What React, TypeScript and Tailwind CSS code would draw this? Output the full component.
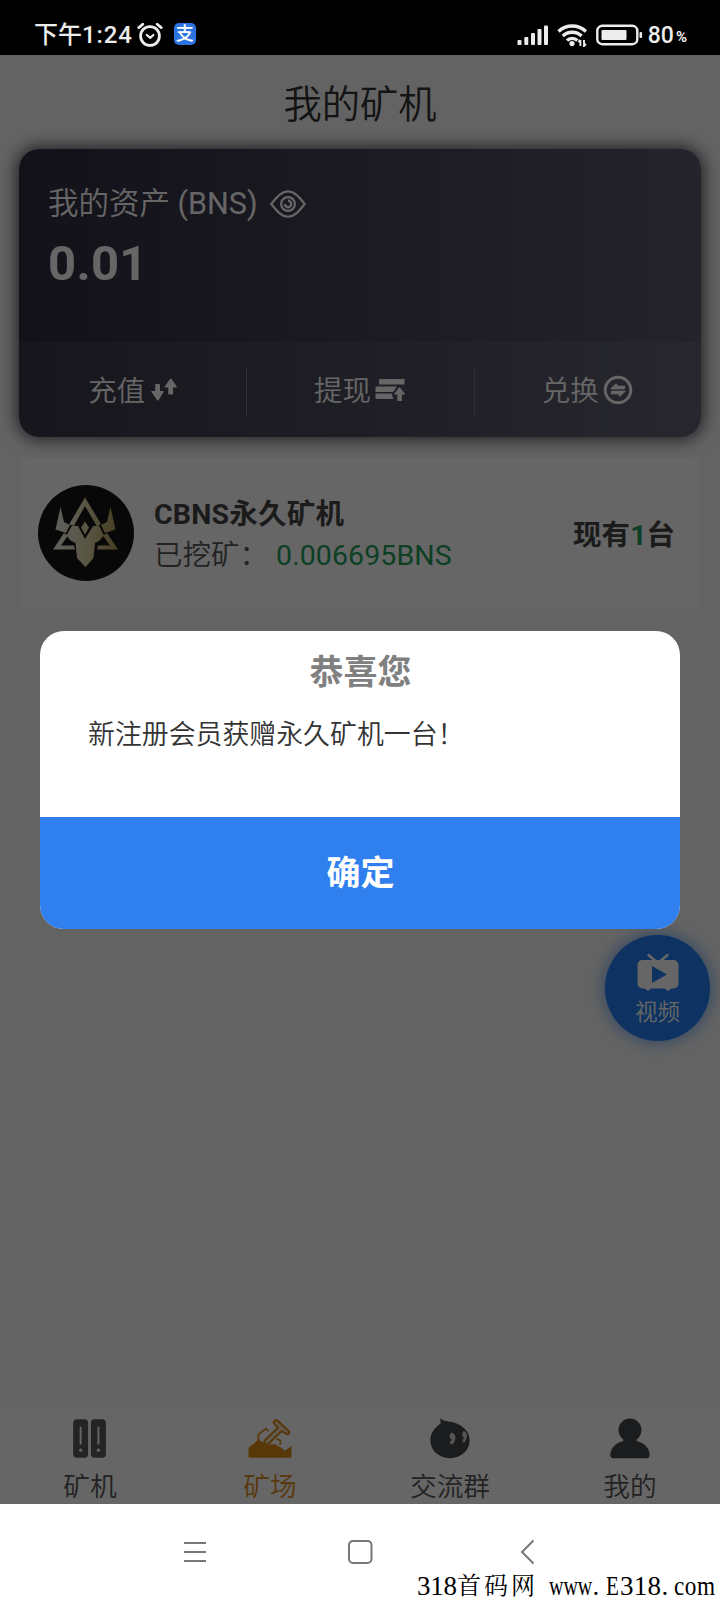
import type { ReactNode } from "react";

function StatusBar() {
  return (
    <div className="flex h-[55px] shrink-0 items-start justify-between bg-black pt-[20px] pr-[33px] pl-[34px] text-[#ececec]">
      <div className="flex h-[30px] items-center">
        <span className="text-[24px] leading-[30px] font-medium whitespace-nowrap">
          下午<span className="tracking-[0.9px]">1:24</span>
        </span>
        <svg className="ml-[4px]" width="26" height="26" viewBox="0 0 26 26" fill="none" stroke="currentColor" strokeWidth="2.8" strokeLinecap="round">
          <circle cx="13" cy="14" r="9.4" />
          <path d="M1.8 5.6 5.8 2.2M24.2 5.6 20.2 2.2" />
          <path d="m9.8 13 3.4 2.8 3.2-2.8" strokeWidth="2.2" strokeLinejoin="round" />
        </svg>
        <span className="mb-[2px] ml-[11px] flex h-[22px] w-[22px] items-center justify-center rounded-[5px] bg-[#2a73e0] text-[18px] leading-none font-medium text-white">
          支
        </span>
      </div>

      <div className="flex h-[30px] items-center">
        <svg width="32" height="22" viewBox="0 0 32 22" fill="currentColor">
          <rect x="0.5" y="16" width="4" height="5" rx="1" />
          <rect x="7.3" y="13" width="4" height="8" rx="1" />
          <rect x="14" y="9" width="4" height="12" rx="1" />
          <rect x="20.5" y="5" width="4" height="16" rx="1" />
          <rect x="27" y="1.5" width="4" height="19.5" rx="1" />
        </svg>
        <svg className="ml-[8px]" width="31" height="24" viewBox="0 0 31 24" fill="none" stroke="currentColor" strokeWidth="3.4">
          <path d="M1.5 8.4a20 20 0 0 1 27.4 0" />
          <path d="M5.8 13a13.5 13.5 0 0 1 18.8 0" />
          <path d="M10 17.4a7.6 7.6 0 0 1 10.4 0" />
          <circle cx="15" cy="20.5" r="2.6" fill="currentColor" stroke="none" />
          <path d="M23.4 17v6M21.4 19l2-2M27 17v6l2-2" strokeWidth="1.9" />
        </svg>
        <svg className="ml-[8px]" width="47" height="22" viewBox="0 0 47 22" fill="none">
          <rect x="1.3" y="1.8" width="40" height="18.4" rx="5" stroke="currentColor" strokeWidth="2.4" />
          <rect x="5.5" y="6" width="25" height="10" rx="1" fill="currentColor" />
          <rect x="43.5" y="8" width="2.6" height="6" rx="1" fill="currentColor" />
        </svg>
        <span className="ml-[5px] pt-[1px] text-[23px] leading-[30px] font-medium">80</span>
        <span className="ml-[2px] pt-[4px] text-[15px] leading-[30px] font-bold">%</span>
      </div>
    </div>
  );
}

function Action({ label, last, children }: { label: string; last?: boolean; children: ReactNode }) {
  return (
    <div className="relative flex flex-1 items-center justify-center text-white">
      <span className="pt-[4px] text-[28.5px] leading-[36px]">{label}</span>
      {children}
      {!last && <span className="absolute top-[26px] -right-px h-[49px] w-px bg-[#77777f]" />}
    </div>
  );
}

function AssetCard() {
  return (
    <div className="mx-[19px] flex h-[288px] w-[682px] flex-col overflow-hidden rounded-[20px] bg-gradient-to-r from-[#302d40] to-[#5c5a6e] shadow-[0_0_16px_3px_rgba(20,20,35,0.7)]">
      <div className="h-[193px] px-[29px] pt-[34px] text-white">
        <div className="flex h-[42px] items-center">
          <span className="text-[30.5px] leading-[42px] whitespace-nowrap">我的资产 (BNS)</span>
          <svg className="ml-[12px]" width="36" height="28" viewBox="0 0 36 28" fill="none" stroke="currentColor" strokeWidth="2.2">
            <path d="M1.3 14C7 7 11.5 1.3 18 1.3S29 7 34.7 14C29 21 24.5 26.7 18 26.7S7 21 1.3 14Z" strokeLinejoin="round" />
            <circle cx="18" cy="14" r="6.9" />
            <path d="M18 10.8a3.2 3.2 0 1 1-3.2 3.2" strokeWidth="2.4" />
          </svg>
        </div>
        <div className="mt-[11px] text-[49px] leading-[56px] font-bold tracking-[0.3px]">0.01</div>
      </div>

      <div className="flex flex-1 bg-white/5">
        <Action label="充值">
          <svg className="ml-[6px]" width="26" height="24" viewBox="0 0 26 24" fill="currentColor">
            <path d="M4.2 7q0-1 1-1h2.8q1 0 1 1v6h3.2q1 0 .4 1l-5 8q-.8 1-1.6 0L.4 14q-.6-1 .4-1h3.400z" />
            <path d="M17.3 15.5q0 1 1 1h2.8q1 0 1-1v-6h3.2q1 0 .4-1l-5-7.5q-.9-1-1.8 0l-5.2 7.500q-.6 1 .4 1h3.2z" />
          </svg>
        </Action>
        <Action label="提现">
          <svg className="ml-[4px]" width="31" height="24" viewBox="0 0 31 24" fill="currentColor">
            <path d="M5 1h24.500v5.500H4V2q0-1 1-1ZM1.500 8.500H22L18 14H.5V9.500q0-1 1-1ZM.5 15.500h16l2 5.500h-17q-1 0-1-1z" />
            <path d="m24.500 9 6 7.500h-3.600V23h-4.600v-6.500h-3.600z" />
          </svg>
        </Action>
        <Action label="兑换" last>
          <svg className="ml-[4px]" width="30" height="30" viewBox="0 0 30 30">
            <circle cx="15" cy="15" r="12.800" fill="none" stroke="currentColor" strokeWidth="3" />
            <path d="m7.500 14 5-5h1.500v2h8l-.5 3zM22.500 16l-5 5H16v-2H8l.5-3z" fill="currentColor" stroke="currentColor" strokeWidth=".6" strokeLinejoin="round" />
          </svg>
        </Action>
      </div>
    </div>
  );
}

function BullLogo() {
  return (
    <svg width="96" height="96" viewBox="0 0 96 96">
      <defs>
        <linearGradient id="gold" x1="15" x2="80" gradientUnits="userSpaceOnUse">
          <stop offset="0" stopColor="#f0efe8" />
          <stop offset="0.5" stopColor="#e0d8ac" />
          <stop offset="1" stopColor="#b09a58" />
        </linearGradient>
      </defs>
      <circle cx="48" cy="48" r="48" fill="#161616" />
      <g fill="url(#gold)">
        <path d="M47 12.500 63 39l-4 2.500L47 21 36 40.500l-5-1ZM26 48l4 2.500L23 60.500h13l1 4H15ZM69 48l-4 2.500 7 10H60l-1 4h21Z" />
        <path d="M22.500 22 26 37l6 3-4 8-10.500-3.500ZM72.500 22 69 37l-6 3 4 8 10.500-3.500Z" />
        <path d="m47 36.500 4 6-4 7-4-7Z" />
        <path d="m34 40.500 6 .5 7 13 8-13 6-.5 5 10-5 5.500-4 2-1.500 15L47.500 82 39 73l-1.500-15-5-2.500-4-5Z" />
      </g>
    </svg>
  );
}

function MinerRow() {
  return (
    <div className="mx-[20px] mt-[21px] flex h-[150px] items-center rounded-md bg-white pr-[25px] pl-[18px]">
      <BullLogo />
      <div className="ml-[20px] flex-1 pt-[4px] text-[28.5px] whitespace-nowrap">
        <div className="h-[41px] font-['Roboto','Noto_Sans_CJK_SC',sans-serif] leading-[41px] font-bold tracking-[0.2px] text-[#444]">CBNS永久矿机</div>
        <div className="h-[41px] leading-[41px] text-[#555]">
          已挖矿：<span className="ml-[8px] tracking-[0.1px] text-[#1e9f5a]">0.006695BNS</span>
        </div>
      </div>
      <div className="pt-[4px] font-['Roboto','Noto_Sans_CJK_SC',sans-serif] text-[28.5px] leading-[41px] font-bold text-[#444]">
        现有<span className="text-[#1e9f5a]">1</span>台
      </div>
    </div>
  );
}

function Tab({ label, active, children }: { label: string; active?: boolean; children: ReactNode }) {
  return (
    <div className={`flex flex-1 flex-col items-center pt-[9px] ${active ? "text-[#dd8d18]" : "text-[#5a5b60]"}`}>
      {children}
      <span className={`mt-[10px] text-[26.7px] leading-[34px] ${active ? "text-[#dd8d18]" : "text-[#555]"}`}>{label}</span>
    </div>
  );
}

function TabBar() {
  return (
    <div className="flex h-[96px] shrink-0 bg-white">
      <Tab label="矿机">
        <svg width="48" height="46" viewBox="0 0 48 46" fill="none">
          <rect x="6" y="2.500" width="16" height="41" rx="4" fill="currentColor" />
          <rect x="25" y="2.500" width="16" height="41" rx="4" fill="currentColor" />
          <path d="M14 10.500v19M33 10.500v19" stroke="white" strokeWidth="2" />
          <circle cx="14" cy="35.500" r="1.700" fill="white" />
          <circle cx="33" cy="35.500" r="1.700" fill="white" />
        </svg>
      </Tab>
      <Tab label="矿场" active>
        <svg width="48" height="46" viewBox="0 0 48 46" fill="none" stroke="currentColor" strokeWidth="1.8" strokeLinejoin="round">
          <path d="M1 33 12 24l8 6 9-1 7 4 4 3 7-5v12.500H1z" fill="currentColor" stroke="none" />
          <path d="M11.500 25v-6l8-6.500 3 2.500M31 23.500l4 1.500v5" />
          <path d="M18.500 28.500c-1.200-1.500-.5-3 .5-4.200L32.500 11.500l-4.500-5q0-3.500 3.500-3L44.500 15.500q.8 3-2.500 2.800L36.500 15 22.500 28.500q-2 1.500-4 0Z" fill="#e3a650" fillOpacity=".35" strokeWidth="2.2" />
        </svg>
      </Tab>
      <Tab label="交流群">
        <svg width="48" height="46" viewBox="0 0 48 46">
          <path d="M13 1c4 4 9 3 15 5 10 3 17 10 17 19 0 11-9 19-21 19S3 36 3 25c0-8 5-14 11-18 0-2 0-4-1-6Z" fill="#41464c" />
          <path d="M25.500 16.500c3.500 1 5 4.500 4.200 7-.8 3.500-2.200 5-3.700 6-3-1-2.500-3.500 0-4.500-.5-1.500-1-1.500-2-2.500-1.200-2 0-5 1.500-6ZM38.500 15c3.500 1 4 4 3.500 6.500s-1.500 5-3 6c-2.500-1-2-3.500 0-4.500-.5-1.500-1-1.500-1.500-2.500-.8-2 0-4.500 1-5.500Z" fill="#d5d5d5" />
        </svg>
      </Tab>
      <Tab label="我的">
        <svg width="48" height="46" viewBox="0 0 48 46" fill="#41464c">
          <circle cx="24" cy="14" r="12.300" />
          <path d="M18 22h12l1.500 4C40 28 45 34 45 41q0 3-3 3H6q-3 0-3-3C3 34 8 28 16.500 26Z" />
        </svg>
      </Tab>
    </div>
  );
}

function VideoButton() {
  return (
    <button className="absolute top-[880px] left-[605px] flex h-[106px] w-[105px] flex-col items-center rounded-full bg-[#2380f5] pt-[18px] text-white shadow-[0_0_14px_3px_rgba(35,128,245,0.5)]">
      <svg width="42" height="40" viewBox="0 0 42 40" fill="none">
        <path d="m11.500 2 7 6M30.500 2l-7 6" stroke="currentColor" strokeWidth="2.500" strokeLinecap="round" />
        <rect x="0.500" y="7" width="41" height="28.500" rx="5" fill="currentColor" />
        <path d="M8 35h6q-3 4.500-6 0ZM28 35h6q-3 4.500-6 0Z" fill="currentColor" stroke="currentColor" />
        <path d="M15 13v17l15-8.500Z" fill="#2380f5" />
      </svg>
      <span className="mt-[4px] text-[22.5px] leading-[30px]">视频</span>
    </button>
  );
}

function Dialog() {
  return (
    <div className="absolute inset-0 bg-black/60 px-[40px] pt-[576px]">
      <div className="h-[298px] overflow-hidden rounded-[24px] bg-white">
        <div className="h-[186px] pt-[17px]">
          <h2 className="pl-[1px] text-center font-['Roboto','Noto_Sans_CJK_SC',sans-serif] text-[34px] leading-[48px] font-bold text-[#808080]">恭喜您</h2>
          <p className="mt-[19px] px-[48px] text-[26.9px] leading-[40px] text-[#333]">新注册会员获赠永久矿机一台！</p>
        </div>
        <button className="flex h-[112px] w-full items-center justify-center bg-[#307fee] pl-[1px] font-['Roboto','Noto_Sans_CJK_SC',sans-serif] text-[34px] font-bold text-white">
          确定
        </button>
      </div>
    </div>
  );
}

function SystemNav() {
  return (
    <div className="relative flex h-[96px] shrink-0 bg-white text-[#777]">
      <div className="flex w-full justify-between pt-[34px] pr-[183px] pl-[182px]">
        <svg width="26" height="28" viewBox="0 0 26 28" stroke="currentColor" strokeWidth="2">
          <path d="M2 5h22M2 14h22M2 23h22" />
        </svg>
        <svg className="mr-[5px]" width="28" height="28" viewBox="0 0 28 28" fill="none" stroke="currentColor" strokeWidth="2">
          <rect x="3" y="3" width="22.500" height="22" rx="4" />
        </svg>
        <svg width="20" height="28" viewBox="0 0 20 28" fill="none" stroke="currentColor" strokeWidth="2">
          <path d="M16.500 2.500 5 14l11.500 11.500" />
        </svg>
      </div>
      <div className="absolute right-0 bottom-0 flex h-[28px] w-[303px] items-center font-['Liberation_Serif','Noto_Serif_CJK_SC',serif] text-[27px] leading-[28px] whitespace-nowrap text-black">
        <span className="w-[40px] tracking-[-0.2px]">318</span>
        <span className="w-[95px] text-[24px] tracking-[3px]">首码网</span>
        <span className="w-[44px]">
          <span className="inline-block w-[44px] origin-left scale-x-[.74]">www</span>
        </span>
        <span className="w-[14px]">.</span>
        <span className="w-[14px]">
          <span className="inline-block origin-left scale-x-[.78]">E</span>
        </span>
        <span className="w-[43px] tracking-[0.3px]">318</span>
        <span className="w-[13px]">.</span>
        <span className="inline-block w-[46px] origin-left scale-x-[.86] tracking-[0.6px]">com</span>
      </div>
    </div>
  );
}

export default function App() {
  return (
    <div className="flex h-[1600px] w-[720px] flex-col overflow-hidden font-['Roboto','Noto_Sans_CJK_SC_DemiLight','Noto_Sans_CJK_SC',sans-serif]">
      <div className="font-['Roboto','Noto_Sans_CJK_SC',sans-serif]">
        <StatusBar />
      </div>
      <main className="relative flex h-[1449px] flex-col bg-[#f8f8f8]">
        <h1 className="h-[94px] pt-[23px] text-center text-[38.3px] leading-[54px] text-[#333]">我的矿机</h1>
        <AssetCard />
        <MinerRow />
        <div className="flex-1" />
        <TabBar />
        <VideoButton />
        <Dialog />
      </main>
      <SystemNav />
    </div>
  );
}
